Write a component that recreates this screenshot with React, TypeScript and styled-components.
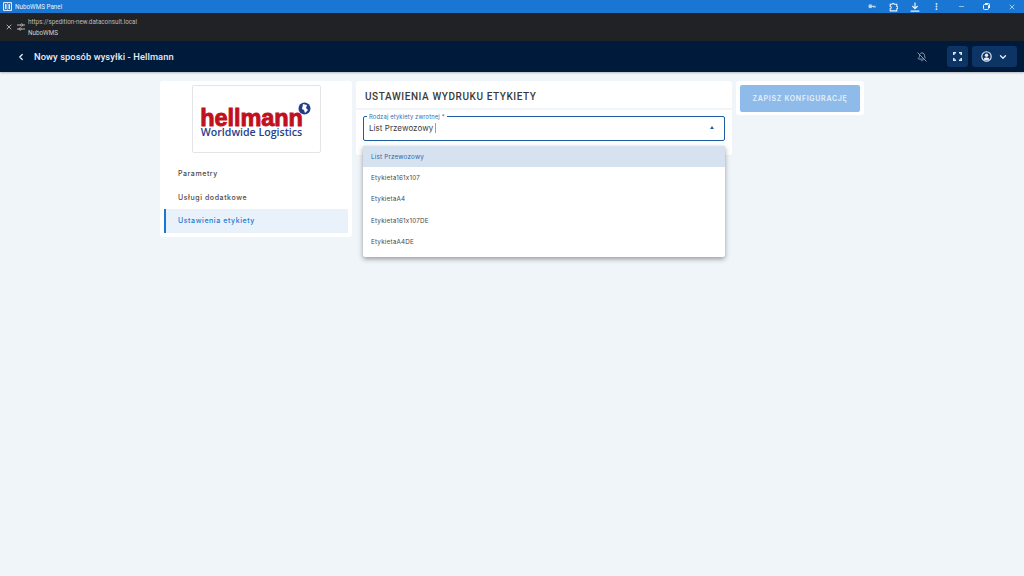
import React from "react";
import styled, { createGlobalStyle } from "styled-components";
import { ChevronLeft, ChevronDown, X, BellOff, EllipsisVertical, Minus } from "lucide-react";

const GlobalStyle = createGlobalStyle`
  html, body {
    margin: 0;
    padding: 0;
    height: 100%;
    background: #f0f5fa;
    font-family: "Inter", "Roboto", sans-serif;
    overflow: hidden;
  }
  #root {
    height: 100%;
  }
`;

const Page = styled.div`
  display: flex;
  flex-direction: column;
  width: 1024px;
  height: 576px;
`;

const TitleBar = styled.div`
  display: flex;
  align-items: center;
  height: 13px;
  background: #1976d2;
  color: #e8f1fb;
  font-family: "Roboto", sans-serif;
  font-size: 6.3px;
  padding-left: 3px;
  flex-shrink: 0;
`;

const AppIcon = styled.svg`
  margin-right: 3px;
`;

const TitleIcons = styled.div`
  display: flex;
  align-items: center;
  margin-left: auto;
  color: #eaf3fc;
`;

const TitleIconSlot = styled.div<{ $w: number }>`
  display: flex;
  align-items: center;
  justify-content: center;
  width: ${(p) => p.$w}px;
`;

const AddressBar = styled.div`
  display: flex;
  align-items: center;
  height: 28px;
  background: #212225;
  color: #d0d0d0;
  padding-left: 5px;
  flex-shrink: 0;
`;

const AddressIcons = styled.div`
  display: flex;
  align-items: center;
  gap: 4px;
  margin-right: 3px;
  color: #c8c8c8;
`;

const AddressText = styled.div`
  display: flex;
  flex-direction: column;
  gap: 3px;
  padding-top: 1px;
  font-family: "Roboto", sans-serif;
  font-size: 6.3px;
  line-height: 8px;
`;

const UrlText = styled.div`
  color: #c4b7ae;
`;

const AppHeader = styled.header`
  display: flex;
  align-items: center;
  height: 31px;
  background: #001a3b;
  color: #e8edf3;
  padding: 0 7px 0 16px;
  box-shadow: 0 1px 2px rgba(0, 0, 0, 0.25);
  flex-shrink: 0;
`;

const PageTitle = styled.h1`
  margin: 0 0 0 8px;
  font-family: "Roboto", sans-serif;
  font-size: 9.3px;
  font-weight: 500;
  letter-spacing: 0.1px;
`;

const HeaderActions = styled.div`
  display: flex;
  align-items: center;
  gap: 4px;
  margin-left: auto;
`;

const MutedBell = styled.div`
  display: flex;
  color: #9aa5b4;
  margin-right: 16px;
`;

const HeaderButton = styled.div<{ $w: number }>`
  display: flex;
  align-items: center;
  justify-content: center;
  gap: 6px;
  width: ${(p) => p.$w}px;
  height: 21px;
  background: #0c3566;
  border-radius: 3px;
  color: #e6ecf4;
`;

const Content = styled.main`
  display: flex;
  justify-content: center;
  align-items: flex-start;
  gap: 4px;
  padding-top: 9px;
`;

const Sidebar = styled.aside`
  display: flex;
  flex-direction: column;
  align-items: center;
  width: 192px;
  height: 156px;
  padding-top: 4px;
  box-sizing: border-box;
  background: #fff;
  border-radius: 3px;
`;

const LogoBox = styled.div`
  display: flex;
  flex-direction: column;
  align-items: center;
  justify-content: center;
  width: 129px;
  height: 68px;
  box-sizing: border-box;
  padding-right: 9px;
  border: 1px solid #e2e5e8;
  border-radius: 2px;
  position: relative;
`;

const LogoMain = styled.div`
  font-family: "Liberation Sans", sans-serif;
  font-weight: 700;
  font-size: 23.5px;
  line-height: 18px;
  color: #c20f1e;
  letter-spacing: -0.1px;
  margin-top: 8px;
  -webkit-text-stroke: 0.9px #c20f1e;
`;

const LogoSub = styled.div`
  font-family: "Open Sans", sans-serif;
  font-weight: 600;
  font-size: 10.6px;
  line-height: 11px;
  color: #27408b;
`;

const LogoGlobe = styled.svg`
  position: absolute;
  left: 105px;
  top: 16px;
`;

const Menu = styled.nav`
  display: flex;
  flex-direction: column;
  align-self: stretch;
  padding: 9px 4px 0;
`;

const MenuItem = styled.div<{ $active?: boolean }>`
  display: flex;
  align-items: center;
  height: 23.5px;
  padding-left: ${(p) => (p.$active ? 12 : 14)}px;
  font-size: 7px;
  font-weight: 500;
  letter-spacing: 0.58px;
  color: ${(p) => (p.$active ? "#1976d2" : "#4a4a4a")};
  background: ${(p) => (p.$active ? "#e9f2fb" : "transparent")};
  border-left: ${(p) => (p.$active ? "2px solid #1976d2" : "none")};
`;

const MainPanel = styled.section`
  display: flex;
  flex-direction: column;
  width: 376px;
  height: 74px;
  gap: 2px;
  border-radius: 3px;
`;

const PanelHeader = styled.div`
  display: flex;
  align-items: center;
  height: 27px;
  padding: 3px 0 0 9px;
  box-sizing: border-box;
  background: #fff;
  border-radius: 3px 3px 0 0;
  font-family: "Roboto", sans-serif;
  font-size: 10px;
  font-weight: 500;
  letter-spacing: 0.58px;
  color: #3a3a3a;
`;

const PanelBody = styled.div`
  flex: 1;
  padding: 6px 7px 0;
  background: #fff;
  border-radius: 0 0 3px 3px;
`;

const SelectField = styled.div`
  position: relative;
  display: flex;
  align-items: center;
  height: 25px;
  box-sizing: border-box;
  padding: 0 10px 2px 5px;
  border: 1px solid #1c5da6;
  border-radius: 2px;
  font-size: 8px;
  letter-spacing: 0.05px;
  color: #3c3c3c;
`;

const FieldLabel = styled.label`
  position: absolute;
  left: 3px;
  top: -4px;
  padding: 0 2px;
  background: #fff;
  font-size: 5.8px;
  line-height: 7px;
  letter-spacing: 0.15px;
  color: #2f6fb5;
`;

const Caret = styled.span`
  display: inline-block;
  width: 1px;
  height: 10px;
  margin-left: 2px;
  background: #7ea6d3;
`;

const Arrow = styled.span`
  margin-left: auto;
  width: 0;
  height: 0;
  border-left: 2.5px solid transparent;
  border-right: 2.5px solid transparent;
  border-bottom: 3px solid #1c5da6;
`;

const Dropdown = styled.ul`
  position: absolute;
  left: -1px;
  right: -1px;
  top: 29px;
  margin: 0;
  padding: 0;
  height: 111px;
  box-sizing: border-box;
  list-style: none;
  background: #fff;
  box-shadow: 0 2px 5px rgba(0, 0, 0, 0.38);
  border-radius: 0 0 2px 2px;
  z-index: 2;
`;

const Option = styled.li<{ $selected?: boolean }>`
  display: flex;
  align-items: center;
  height: 21.3px;
  padding-left: 8px;
  font-size: 6.3px;
  letter-spacing: 0.2px;
  color: ${(p) => (p.$selected ? "#2a66ad" : "#4b4b4b")};
  background: ${(p) => (p.$selected ? "#d6e2f0" : "transparent")};
`;

const ActionPanel = styled.div`
  padding: 4px;
  width: 128px;
  height: 34px;
  box-sizing: border-box;
  background: #fff;
  border-radius: 3px;
`;

const SaveButton = styled.button`
  width: 100%;
  height: 27px;
  border: none;
  border-radius: 2px;
  background: #8ebbe9;
  color: #e6f0fa;
  font-family: inherit;
  font-size: 7px;
  font-weight: 600;
  letter-spacing: 0.7px;
`;

const options = ["List Przewozowy", "Etykieta161x107", "EtykietaA4", "Etykieta161x107DE", "EtykietaA4DE"];
const menu = ["Parametry", "Usługi dodatkowe"];

export default function App() {
  return (
    <>
      <GlobalStyle />
      <Page>
        <TitleBar>
          <AppIcon width="9" height="9" viewBox="0 0 9 9">
            <rect width="9" height="9" rx="1" fill="#dbe9f8" />
            <path d="M1.5 1.5h2.5v6h-2.5zM5 1.5h2.5v6h-2.5z" fill="none" stroke="#1b6cc4" strokeWidth="0.9" />
          </AppIcon>
          NuboWMS Panel
          <TitleIcons>
            <TitleIconSlot $w={14}>
              <svg width="8" height="5" viewBox="0 0 9 6" fill="#b9d4ef">
                <path d="M2.5 0.4a2.3 2.3 0 1 1 0 4.8a2.3 2.3 0 0 1 0-4.8zM4.5 2h4.3v2.4h-1v-.8h-.7v.8h-1v-.8h-1.6z" />
              </svg>
            </TitleIconSlot>
            <TitleIconSlot $w={28}>
              <svg width="9" height="10" viewBox="0 0 9 10" fill="none" stroke="currentColor" strokeWidth="1.1">
                <path d="M1.2 2.3h1.8a1.1 1.1 0 0 1 2.2 0h2.6v2.2a1.1 1.1 0 0 1 0 2.2v2.2H1.2V6.7a1.1 1.1 0 0 0 0-2.2z" />
              </svg>
            </TitleIconSlot>
            <TitleIconSlot $w={16}>
              <svg width="10" height="10" viewBox="0 0 10 10" fill="none" stroke="currentColor" strokeWidth="1.2">
                <path d="M5 0.5v5.8M2.4 4l2.6 2.6L7.6 4M0.6 9.2h8.8" />
              </svg>
            </TitleIconSlot>
            <TitleIconSlot $w={26}><EllipsisVertical size={9} strokeWidth={3} /></TitleIconSlot>
            <TitleIconSlot $w={25}><Minus size={7} /></TitleIconSlot>
            <TitleIconSlot $w={25}>
              <svg width="7" height="7" viewBox="0 0 7 7" fill="none" stroke="currentColor">
                <rect x="0.5" y="1.5" width="5" height="5" rx="1" />
                <path d="M2 .5h3.5a1 1 0 0 1 1 1V5" />
              </svg>
            </TitleIconSlot>
            <TitleIconSlot $w={25}><X size={8} /></TitleIconSlot>
          </TitleIcons>
        </TitleBar>
        <AddressBar>
          <AddressIcons>
            <X size={8} strokeWidth={2.5} />
            <svg width="8" height="8" viewBox="0 0 8 8" fill="none" stroke="currentColor" strokeWidth="0.9">
              <path d="M0 2h3.5M6 2h2M0 6h2M4.5 6H8" />
              <circle cx="4.7" cy="2" r="1.1" />
              <circle cx="3.2" cy="6" r="1.1" />
            </svg>
          </AddressIcons>
          <AddressText>
            <UrlText>https://spedition-new.dataconsult.local</UrlText>
            <div>NuboWMS</div>
          </AddressText>
        </AddressBar>
        <AppHeader>
          <ChevronLeft size={10} strokeWidth={3} />
          <PageTitle>Nowy sposób wysyłki - Hellmann</PageTitle>
          <HeaderActions>
            <MutedBell><BellOff size={10} strokeWidth={2.2} /></MutedBell>
            <HeaderButton $w={21}>
              <svg width="9" height="9" viewBox="0 0 9 9" fill="none" stroke="currentColor" strokeWidth="1.5">
                <path d="M0.8 3V0.8H3M6 0.8h2.2V3M8.2 6v2.2H6M3 8.2H0.8V6" />
              </svg>
            </HeaderButton>
            <HeaderButton $w={45}>
              <svg width="11" height="11" viewBox="0 0 11 11">
                <circle cx="5.5" cy="5.5" r="4.7" fill="none" stroke="currentColor" strokeWidth="1.1" />
                <circle cx="5.5" cy="4.2" r="1.7" fill="currentColor" />
                <path d="M2.6 8.2c.7-1.2 1.7-1.6 2.9-1.6s2.2.4 2.9 1.6a4 4 0 0 1-5.8 0z" fill="currentColor" />
              </svg>
              <ChevronDown size={10} strokeWidth={3.2} />
            </HeaderButton>
          </HeaderActions>
        </AppHeader>
        <Content>
          <Sidebar>
            <LogoBox>
              <LogoMain>hellmann</LogoMain>
              <LogoSub>Worldwide Logistics</LogoSub>
              <LogoGlobe width="13" height="13" viewBox="0 0 13 13">
                <circle cx="6.5" cy="6.5" r="6" fill="#1f3f8a" />
                <path d="M5 2l4 1-1 3 2 2-3 3-1-3-2-1z" fill="#fff" />
              </LogoGlobe>
            </LogoBox>
            <Menu>
              {menu.map((m) => (
                <MenuItem key={m}>{m}</MenuItem>
              ))}
              <MenuItem $active>Ustawienia etykiety</MenuItem>
            </Menu>
          </Sidebar>
          <MainPanel>
            <PanelHeader>USTAWIENIA WYDRUKU ETYKIETY</PanelHeader>
            <PanelBody>
              <SelectField>
                <FieldLabel>Rodzaj etykiety zwrotnej *</FieldLabel>
                List Przewozowy
                <Caret />
                <Arrow />
                <Dropdown>
                  {options.map((o, i) => (
                    <Option key={o} $selected={i === 0}>{o}</Option>
                  ))}
                </Dropdown>
              </SelectField>
            </PanelBody>
          </MainPanel>
          <ActionPanel>
            <SaveButton>ZAPISZ KONFIGURACJĘ</SaveButton>
          </ActionPanel>
        </Content>
      </Page>
    </>
  );
}
